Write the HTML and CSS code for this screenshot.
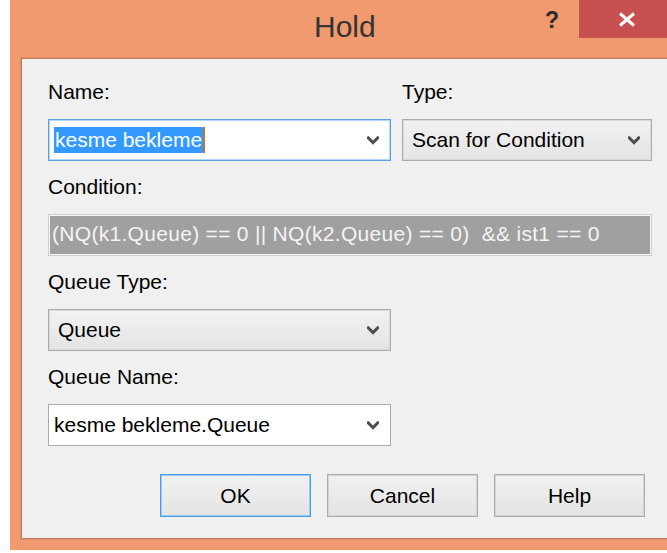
FILE: index.html
```html
<!DOCTYPE html>
<html lang="en">
<head>
<meta charset="utf-8">
<title>Hold</title>
<link rel="stylesheet" href="styles.css">
</head>
<body>
<div class="window">
  <div class="titlebar">
    <span class="title">Hold</span>
    <span class="help-q">?</span>
    <button class="close" type="button" aria-label="Close">
      <svg width="18" height="15" viewBox="0 0 18 15"><path d="M2 1.5 L16 13.5 M16 1.5 L2 13.5" stroke="#fff" stroke-width="3" fill="none"/></svg>
    </button>
  </div>

  <div class="client">
    <div class="top-row">
      <div class="group name-col">
        <label class="lbl">Name:</label>
        <div class="combo edit focused">
          <span class="sel">kesme bekleme</span>
          <svg class="chev" width="12" height="9" viewBox="0 0 12 9"><polyline points="1.2,1.8 6,6.6 10.8,1.8"/></svg>
        </div>
      </div>
      <div class="group type-col">
        <label class="lbl">Type:</label>
        <div class="combo list">
          <span>Scan for Condition</span>
          <svg class="chev" width="12" height="9" viewBox="0 0 12 9"><polyline points="1.2,1.8 6,6.6 10.8,1.8"/></svg>
        </div>
      </div>
    </div>

    <div class="group">
      <label class="lbl">Condition:</label>
      <div class="condition">(NQ(k1.Queue) == 0 || NQ(k2.Queue) == 0)&nbsp; &amp;&amp; ist1 == 0</div>
    </div>

    <div class="group narrow">
      <label class="lbl">Queue Type:</label>
      <div class="combo list">
        <span>Queue</span>
        <svg class="chev" width="12" height="9" viewBox="0 0 12 9"><polyline points="1.2,1.8 6,6.6 10.8,1.8"/></svg>
      </div>
    </div>

    <div class="group narrow">
      <label class="lbl">Queue Name:</label>
      <div class="combo edit">
        <span>kesme bekleme.Queue</span>
        <svg class="chev" width="12" height="9" viewBox="0 0 12 9"><polyline points="1.2,1.8 6,6.6 10.8,1.8"/></svg>
      </div>
    </div>

    <div class="buttons">
      <button class="btn default" type="button">OK</button>
      <button class="btn" type="button">Cancel</button>
      <button class="btn" type="button">Help</button>
    </div>
  </div>
</div>
</body>
</html>
```

FILE: styles.css
```css
* { box-sizing: border-box; }

body {
  margin: 0;
  width: 667px;
  height: 553px;
  overflow: hidden;
  background: #ffffff;
  font-family: "Liberation Sans", Arial, sans-serif;
  color: #000;
}

/* dialog frame */
.window {
  margin-left: 10px;
  width: 657px;
  height: 550px;
  background: #f1996f;
  display: flex;
  flex-direction: column;
}

.titlebar {
  height: 58px;
  flex-shrink: 0;
  display: flex;
  align-items: flex-start;
}

.title {
  margin: 10px 0 0 304px;
  font-size: 30px;
  line-height: 34px;
  color: #333333;
}

.help-q {
  margin: 7px 0 0 auto;
  font-size: 23px;
  line-height: 26px;
  font-weight: bold;
  color: #2b2b2b;
}

.close {
  margin-left: 20px;
  width: 88px;
  height: 38px;
  border: 0;
  padding: 0 0 0 8px;
  background: #c75050;
  display: flex;
  align-items: center;
  justify-content: center;
}

/* client area */
.client {
  flex: 1;
  margin: 0 0 11px 11px;
  background: #f0f0f0;
  border: 1px solid #c47c5c;
  border-right: 0;
  box-shadow: 0 0 0 1px #dd8c67;
  padding: 20px 0 0 26px;
  display: flex;
  flex-direction: column;
  gap: 13px;
}

.top-row {
  display: flex;
  gap: 11px;
}

.group {
  display: flex;
  flex-direction: column;
}

.name-col { width: 343px; }
.type-col { width: 250px; }
.narrow { width: 343px; }

.lbl {
  font-size: 21px;
  line-height: 26px;
  margin-bottom: 14px;
}

/* combo boxes */
.combo {
  height: 42px;
  display: flex;
  align-items: center;
  justify-content: space-between;
  font-size: 21px;
  line-height: 24px;
  padding-right: 11px;
}

.combo.edit {
  background: #ffffff;
  border: 1px solid #ababab;
  padding-left: 5px;
}

.combo.edit.focused {
  border-color: #5a9fe6;
  box-shadow: inset 0 0 0 1px #b7d6f5;
}

.combo.list {
  background: linear-gradient(#f2f2f2, #e4e4e4);
  border: 1px solid #acacac;
  box-shadow: inset 0 0 0 1px #dadada;
  padding-left: 9px;
}

.sel {
  position: relative;
  background: #3399ff;
  color: #ffffff;
  line-height: 26px;
  padding: 0 2px 0 1px;
}

.sel::after {
  content: "";
  position: absolute;
  right: -1px;
  top: 0;
  width: 2px;
  height: 26px;
  background: #c4722f;
}

.chev {
  fill: none;
  stroke: #4f4f4f;
  stroke-width: 3;
  stroke-linecap: square;
  flex-shrink: 0;
}

/* condition expression box */
.condition {
  width: 604px;
  height: 42px;
  background: #a0a0a0;
  border: 1px solid #cdcdcd;
  box-shadow: inset 0 0 0 1px #f6f6f6;
  color: #f4f4f4;
  font-size: 21px;
  line-height: 38px;
  padding-left: 3px;
  letter-spacing: 0.3px;
  white-space: nowrap;
}

/* command buttons */
.buttons {
  display: flex;
  gap: 16px;
  margin: 15px 0 0 112px;
}

.btn {
  width: 151px;
  height: 43px;
  font-family: "Liberation Sans", Arial, sans-serif;
  font-size: 21px;
  color: #000;
  background: linear-gradient(#f1f1f1, #e4e4e4);
  border: 1px solid #adadad;
  box-shadow: inset 0 0 0 1px #d4d4d4;
  padding: 0;
}

.btn.default {
  border-color: #4a9cec;
  box-shadow: inset 0 0 0 1px #9fcaf3;
}
```
